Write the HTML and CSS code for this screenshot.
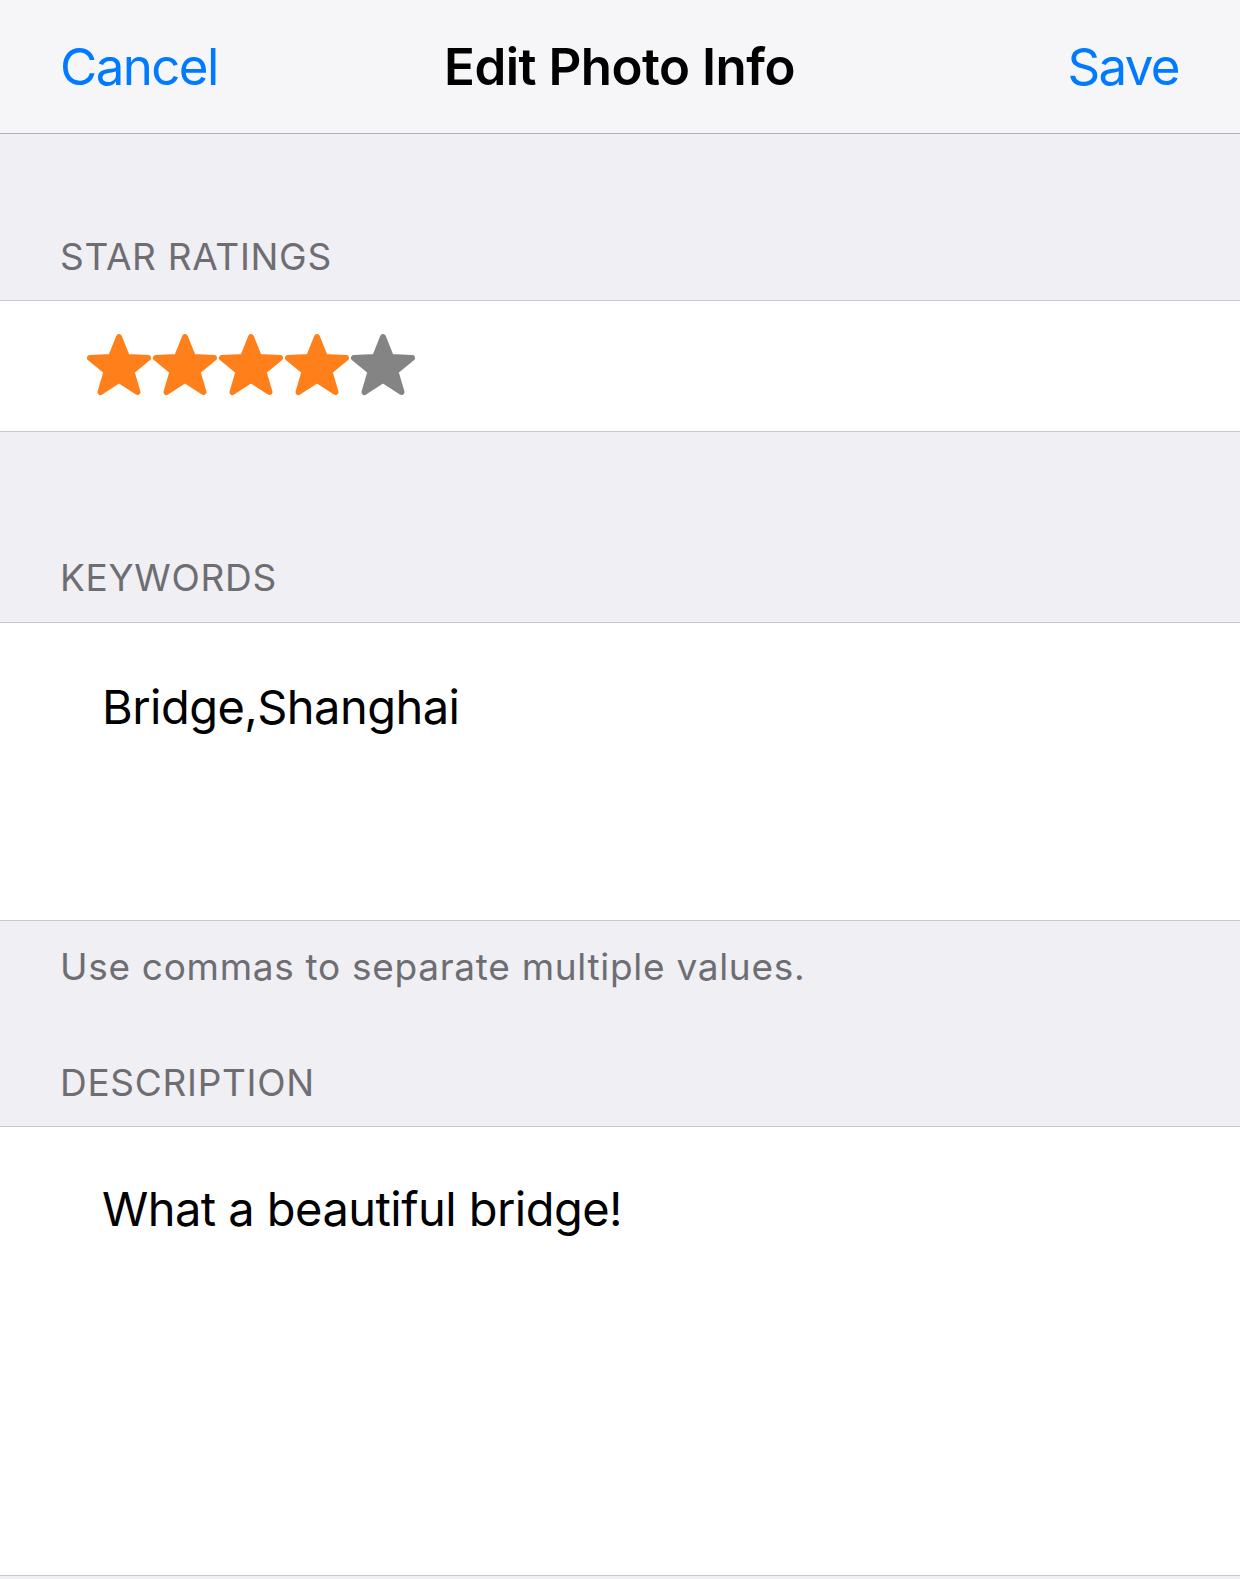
FILE: index.html
```html
<!DOCTYPE html>
<html lang="en">
<head>
<meta charset="utf-8">
<title>Edit Photo Info</title>
<link rel="stylesheet" href="styles.css">
</head>
<body>
<div class="screen">
  <header class="navbar">
    <span class="nav-btn left">Cancel</span>
    <span class="nav-title">Edit Photo Info</span>
    <span class="nav-btn right">Save</span>
  </header>

  <div class="group-header first">STAR RATINGS</div>
  <div class="cell stars-cell">
    <div class="stars">
      <svg class="star on" viewBox="0 0 66 63"><path d="M33 4 L41 24 L62 25 L45.5 38.5 L51.5 59 L33 47 L14.5 59 L20.5 38.5 L4 25 L25 24 Z"/></svg>
      <svg class="star on" viewBox="0 0 66 63"><path d="M33 4 L41 24 L62 25 L45.5 38.5 L51.5 59 L33 47 L14.5 59 L20.5 38.5 L4 25 L25 24 Z"/></svg>
      <svg class="star on" viewBox="0 0 66 63"><path d="M33 4 L41 24 L62 25 L45.5 38.5 L51.5 59 L33 47 L14.5 59 L20.5 38.5 L4 25 L25 24 Z"/></svg>
      <svg class="star on" viewBox="0 0 66 63"><path d="M33 4 L41 24 L62 25 L45.5 38.5 L51.5 59 L33 47 L14.5 59 L20.5 38.5 L4 25 L25 24 Z"/></svg>
      <svg class="star off" viewBox="0 0 66 63"><path d="M33 4 L41 24 L62 25 L45.5 38.5 L51.5 59 L33 47 L14.5 59 L20.5 38.5 L4 25 L25 24 Z"/></svg>
    </div>
  </div>

  <div class="group-header second">KEYWORDS</div>
  <div class="cell text-cell keywords">Bridge,Shanghai</div>
  <div class="group-footer">Use commas to separate multiple values.</div>

  <div class="group-header third">DESCRIPTION</div>
  <div class="cell text-cell description">What a beautiful bridge!</div>
  <div class="bottom"></div>
</div>
</body>
</html>
```
FILE: styles.css
```css
* { box-sizing: border-box; }
html, body {
  margin: 0;
  padding: 0;
  background: #efeff4;
}
body {
  font-family: Inter, "Noto Sans", "Liberation Sans", sans-serif;
  width: 1240px;
  height: 1579px;
  overflow: hidden;
}
.screen {
  display: flex;
  flex-direction: column;
}
.navbar {
  height: 134px;
  background: #f6f6f8;
  border-bottom: 1px solid #b2b2b2;
  display: grid;
  grid-template-columns: 1fr auto 1fr;
  align-items: center;
  padding: 0 61px 0 60px;
}
.nav-btn {
  color: #007aff;
  font-size: 51px;
  letter-spacing: -1.6px;
}
.nav-btn.left { justify-self: start; }
.nav-btn.right { justify-self: end; }
.nav-title {
  color: #000;
  font-size: 51px;
  font-weight: 600;
  letter-spacing: -0.5px;
}
.group-header {
  color: #6d6d72;
  font-size: 37px;
  letter-spacing: 0.7px;
  padding-left: 60px;
  display: flex;
  align-items: flex-end;
  line-height: 44px;
  border-bottom: 1px solid #c8c7cc;
}
.group-header.first { height: 167px; padding-bottom: 21px; }
.group-header.second { height: 191px; padding-bottom: 22px; }
.group-header.third { height: 138px; padding-bottom: 21px; }
.cell {
  background: #fff;
  border-bottom: 1px solid #c8c7cc;
}
.stars-cell {
  height: 131px;
  display: flex;
  align-items: center;
  padding-left: 86px;
  padding-bottom: 4px;
}
.stars {
  display: flex;
}
.star {
  width: 66px;
  height: 63px;
  display: block;
}
.star path {
  stroke-linejoin: round;
  stroke-width: 6px;
}
.star.on path { fill: #ff7f1a; stroke: #ff7f1a; }
.star.off path { fill: #848484; stroke: #848484; }
.text-cell {
  color: #000;
  font-size: 47px;
  letter-spacing: -0.55px;
  padding-left: 102px;
  line-height: 60px;
}
.keywords { height: 298px; padding-top: 54px; }
.description { height: 449px; padding-top: 52px; }
.group-footer {
  color: #6d6d72;
  font-size: 37px;
  letter-spacing: 0.7px;
  padding-left: 60px;
  padding-top: 24px;
  line-height: 44px;
}
.bottom { height: 20px; }
```
